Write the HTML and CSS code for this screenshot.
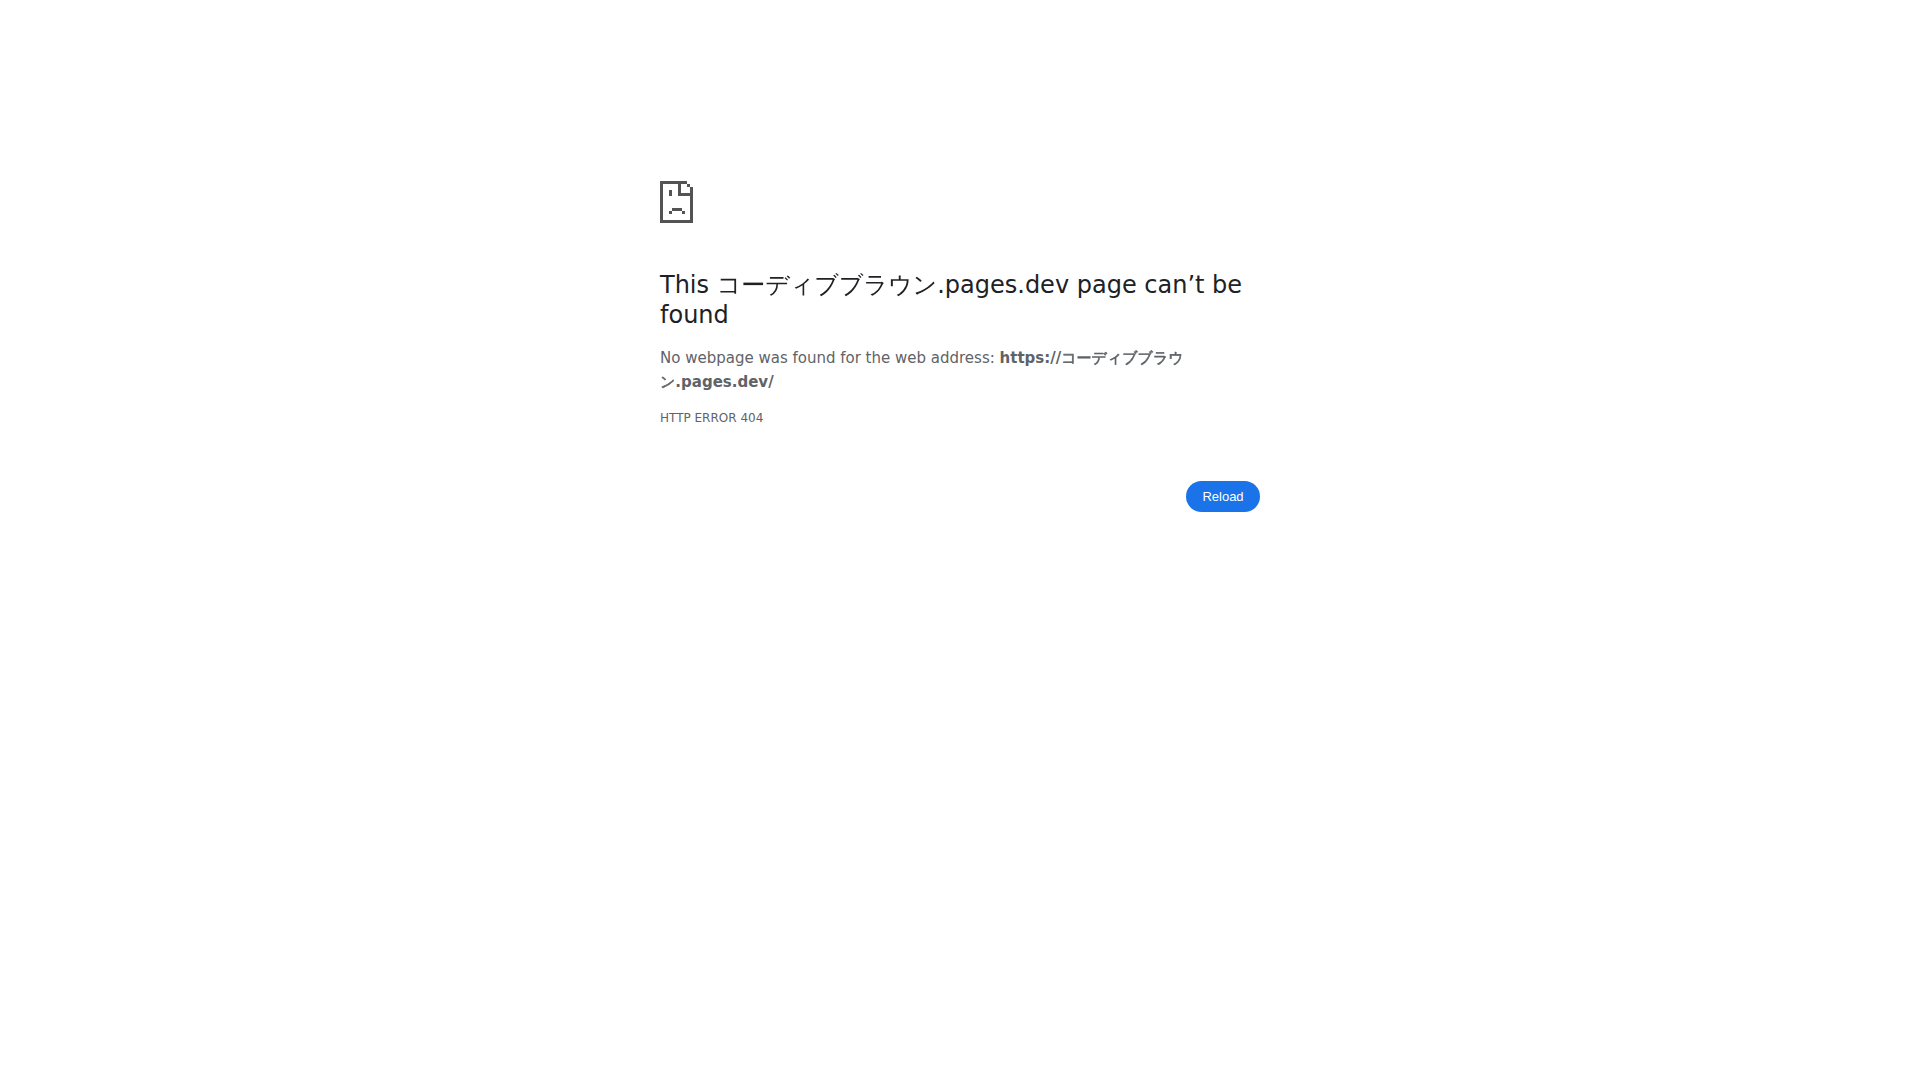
FILE: index.html
```html
<!DOCTYPE html>
<html lang="en">
<head>
    <meta charset="UTF-8">
    <meta name="viewport" content="width=device-width, initial-scale=1.0">
    <title>コーディブブラウン.pages.dev</title>
    <link rel="stylesheet" href="styles.css">
</head>
<body>

    <main class="interstitial">
        <!-- Sad page icon -->
        <svg class="icon" viewBox="0 0 36 42" fill="#535353" shape-rendering="crispEdges" aria-hidden="true">
            <path d="M0 0H27V3H3V39H30V15H18V3H21V12H30V6H33V42H0Z"/>
            <path d="M27 3H30V6H27ZM9 9H12V15H9ZM12 27H22V30H12ZM9 30H12V33H9ZM22 30H25V33H22Z"/>
        </svg>

        <!-- Error message -->
        <h1>This コーディブブラウン.pages.dev page can’t be found</h1>
        <p>No webpage was found for the web address: <strong>https://<span class="kana">コーディブブラウン</span>.pages.dev/</strong></p>
        <div class="error-code">HTTP ERROR 404</div>

        <div class="buttons">
            <button id="reloadButton" type="button">Reload</button>
        </div>
    </main>

    <script>
        document.getElementById('reloadButton').addEventListener('click', function () {
            location.reload();
        });
    </script>
</body>
</html>
```

FILE: styles.css
```css
body {
    margin: 0;
    background-color: #fff;
    color: #5f6368;
    font-family: "DejaVu Sans", "WenQuanYi Zen Hei", "Noto Sans CJK JP", sans-serif;
    font-size: 15px;
    line-height: 24px;
}

.interstitial {
    max-width: 600px;
    margin: 0 auto;
    padding-top: 181px;
}

.icon {
    display: block;
    width: 36px;
    height: 42px;
}

h1 {
    margin: 47px 0 16px;
    color: #202124;
    font-size: 24px;
    font-weight: 400;
    line-height: 30px;
}

p {
    margin: 0;
}

/* The kana font has no bold face */
.kana {
    -webkit-text-stroke: 0.04em currentColor;
}

.error-code {
    margin-top: 12px;
    font-size: 12px;
}

/* Buttons */
.buttons {
    display: flex;
    justify-content: flex-end;
    margin-top: 51px;
}

.buttons button {
    min-width: 74px;
    padding: 8px 16px;
    background-color: #1a73e8;
    color: #fff;
    border: 0;
    border-radius: 20px;
    cursor: pointer;
    font-family: "Liberation Sans", Arial, sans-serif;
    font-size: 13px;
}
```
